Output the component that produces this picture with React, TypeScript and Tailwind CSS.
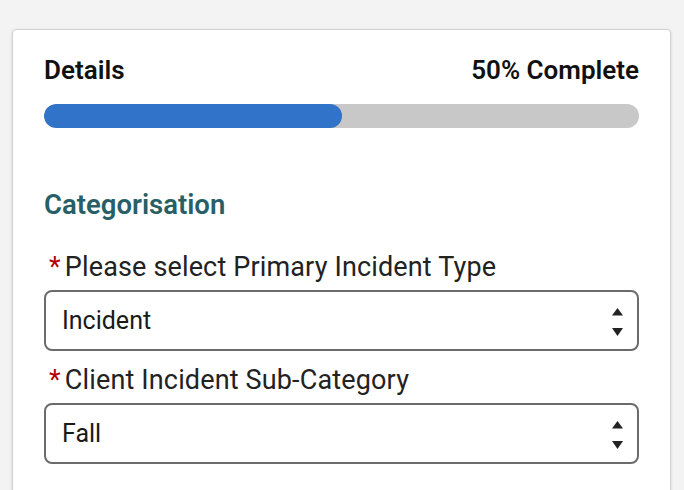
import React from "react";

function Arrows() {
  return (
    <svg width="11" height="28" viewBox="0 0 11 28" className="mt-[3px] shrink-0">
      <polygon points="5.5,0 11,7.5 0,7.5" fill="#222" />
      <polygon points="0,20 11,20 5.5,28" fill="#222" />
    </svg>
  );
}

function Select({ value }: { value: string }) {
  return (
    <div className="flex h-[61px] items-center justify-between rounded-[8px] border-2 border-[#6b6b6b] bg-white pl-[16px] pr-[14px]">
      <span className="text-[25px] leading-[30px] text-[#1a1a1a]">{value}</span>
      <Arrows />
    </div>
  );
}

function Label({ text }: { text: string }) {
  return (
    <div className="flex items-baseline text-[27px] leading-[32px] tracking-[0.15px] text-[#222]">
      <span className="ml-[5px] mr-[4px] text-[#b00000]">*</span>
      <span>{text}</span>
    </div>
  );
}

export default function App() {
  return (
    <div className="h-[490px] w-[684px] overflow-hidden bg-[#f3f3f3]" style={{ fontFamily: "Roboto, 'Noto Sans', sans-serif" }}>
      <div className="ml-[12px] mt-[29px] h-[480px] w-[659px] rounded-[4px] border border-[#d2d2d2] bg-white px-[31px] pt-[25px] shadow-[0_1px_3px_rgba(0,0,0,0.15)]">
        <div className="flex items-center justify-between text-[26px] font-semibold leading-[30px] text-[#111]">
          <span>Details</span>
          <span>50% Complete</span>
        </div>
        <div className="mt-[19px] h-[24px] w-full overflow-hidden rounded-full bg-[#c8c8c8]">
          <div className="h-full w-1/2 rounded-full bg-[#3173c8]" />
        </div>
        <div className="mt-[61px] text-[27.5px] font-semibold leading-[32px] text-[#285f66]">Categorisation</div>
        <div className="mt-[30px]">
          <Label text="Please select Primary Incident Type" />
        </div>
        <div className="mt-[7px]">
          <Select value="Incident" />
        </div>
        <div className="mt-[13px]">
          <Label text="Client Incident Sub-Category" />
        </div>
        <div className="mt-[7px]">
          <Select value="Fall" />
        </div>
      </div>
    </div>
  );
}
